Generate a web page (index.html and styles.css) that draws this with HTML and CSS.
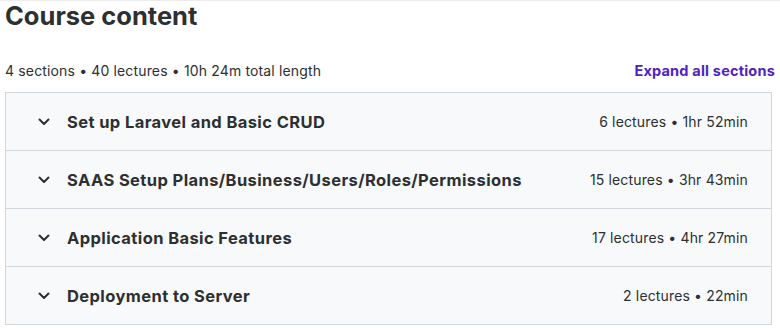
FILE: index.html
```html
<!DOCTYPE html>
<html lang="en">

<head>
    <meta charset="UTF-8">
    <meta name="viewport" content="width=device-width, initial-scale=1.0">
    <title>Course content</title>
    <link rel="stylesheet" href="styles.css">
</head>

<body>
    <div class="course-content">
        <h2 class="title">Course content</h2>

        <div class="summary">
            <span class="summary-text">4 sections &bull; 40 lectures &bull; 10h 24m total length</span>
            <button class="expand-all">Expand all sections</button>
        </div>

        <div class="sections">
            <div class="section">
                <div class="section-name">
                    <svg class="chevron" viewBox="0 0 12 8" width="12" height="8"><path d="M1.5 1.5 6 6l4.5-4.5"/></svg>
                    <span>Set up Laravel and Basic CRUD</span>
                </div>
                <span class="section-meta">6 lectures &bull; 1hr 52min</span>
            </div>
            <div class="section">
                <div class="section-name">
                    <svg class="chevron" viewBox="0 0 12 8" width="12" height="8"><path d="M1.5 1.5 6 6l4.5-4.5"/></svg>
                    <span>SAAS Setup Plans/Business/Users/Roles/Permissions</span>
                </div>
                <span class="section-meta">15 lectures &bull; 3hr 43min</span>
            </div>
            <div class="section">
                <div class="section-name">
                    <svg class="chevron" viewBox="0 0 12 8" width="12" height="8"><path d="M1.5 1.5 6 6l4.5-4.5"/></svg>
                    <span>Application Basic Features</span>
                </div>
                <span class="section-meta">17 lectures &bull; 4hr 27min</span>
            </div>
            <div class="section">
                <div class="section-name">
                    <svg class="chevron" viewBox="0 0 12 8" width="12" height="8"><path d="M1.5 1.5 6 6l4.5-4.5"/></svg>
                    <span>Deployment to Server</span>
                </div>
                <span class="section-meta">2 lectures &bull; 22min</span>
            </div>
        </div>
    </div>
</body>

</html>
```

FILE: styles.css
```css
body {
    margin: 0;
    background-color: #ffffff;
    font-family: Inter, "Noto Sans", sans-serif;
    color: #2d2f31;
}

.course-content {
    border-top: 1px solid #ececec;
    padding: 0 8px 0 5px;
}

.title {
    margin: 0;
    font-size: 25.5px;
    line-height: 30px;
    font-weight: 700;
}

.summary {
    display: flex;
    justify-content: space-between;
    align-items: baseline;
    margin-top: 30px;
    margin-right: -3px;
}

.summary-text {
    font-size: 14px;
    line-height: 20px;
    letter-spacing: 0.15px;
}

.expand-all {
    border: none;
    background: none;
    padding: 0;
    font-family: inherit;
    font-size: 14.5px;
    font-weight: 700;
    letter-spacing: 0.2px;
    color: #5022c3;
    cursor: pointer;
}

.sections {
    margin-top: 11px;
    border: 1px solid #d1d7dc;
    border-bottom: none;
}

.section {
    display: flex;
    align-items: center;
    justify-content: space-between;
    height: 57px;
    padding: 0 23px 0 32px;
    background-color: #f7f9fa;
    border-bottom: 1px solid #d1d7dc;
}

.section-name {
    display: flex;
    align-items: center;
    gap: 17px;
    font-size: 16.5px;
    font-weight: 700;
    letter-spacing: 0.4px;
}

.chevron {
    fill: none;
    stroke: #2d2f31;
    stroke-width: 2;
    stroke-linecap: round;
    stroke-linejoin: round;
}

.section-meta {
    font-size: 14px;
    letter-spacing: 0.15px;
}
```
